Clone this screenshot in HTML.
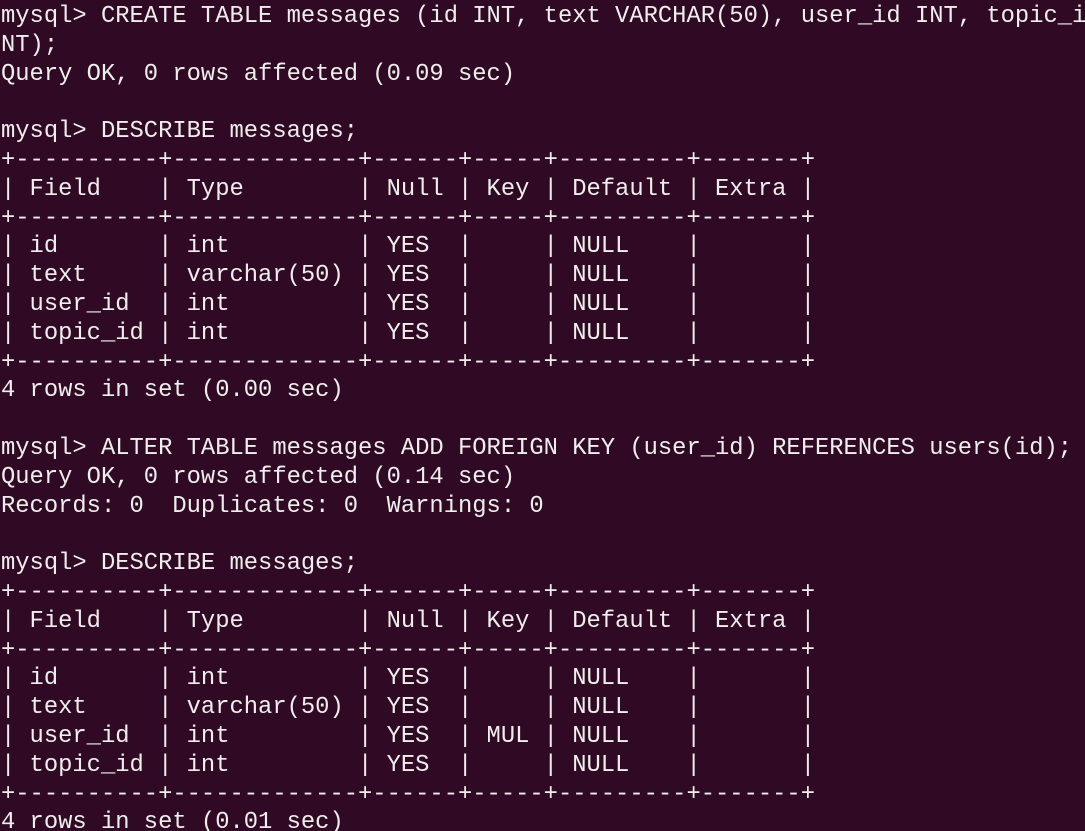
<!DOCTYPE html>
<html><head><meta charset="utf-8"><style>
html,body{margin:0;padding:0;background:#300a24;width:1085px;height:831px;overflow:hidden}
pre{margin:0;padding:3px 0 0 1px;font-family:"Liberation Mono","DejaVu Sans Mono",monospace;font-size:23.8px;line-height:28.8px;color:#eeeeec;white-space:pre}
</style></head><body><pre>mysql&gt; CREATE TABLE messages (id INT, text VARCHAR(50), user_id INT, topic_i
NT);
Query OK, 0 rows affected (0.09 sec)

mysql&gt; DESCRIBE messages;
+----------+-------------+------+-----+---------+-------+
| Field    | Type        | Null | Key | Default | Extra |
+----------+-------------+------+-----+---------+-------+
| id       | int         | YES  |     | NULL    |       |
| text     | varchar(50) | YES  |     | NULL    |       |
| user_id  | int         | YES  |     | NULL    |       |
| topic_id | int         | YES  |     | NULL    |       |
+----------+-------------+------+-----+---------+-------+
4 rows in set (0.00 sec)

mysql&gt; ALTER TABLE messages ADD FOREIGN KEY (user_id) REFERENCES users(id);
Query OK, 0 rows affected (0.14 sec)
Records: 0  Duplicates: 0  Warnings: 0

mysql&gt; DESCRIBE messages;
+----------+-------------+------+-----+---------+-------+
| Field    | Type        | Null | Key | Default | Extra |
+----------+-------------+------+-----+---------+-------+
| id       | int         | YES  |     | NULL    |       |
| text     | varchar(50) | YES  |     | NULL    |       |
| user_id  | int         | YES  | MUL | NULL    |       |
| topic_id | int         | YES  |     | NULL    |       |
+----------+-------------+------+-----+---------+-------+
4 rows in set (0.01 sec)
</pre></body></html>
